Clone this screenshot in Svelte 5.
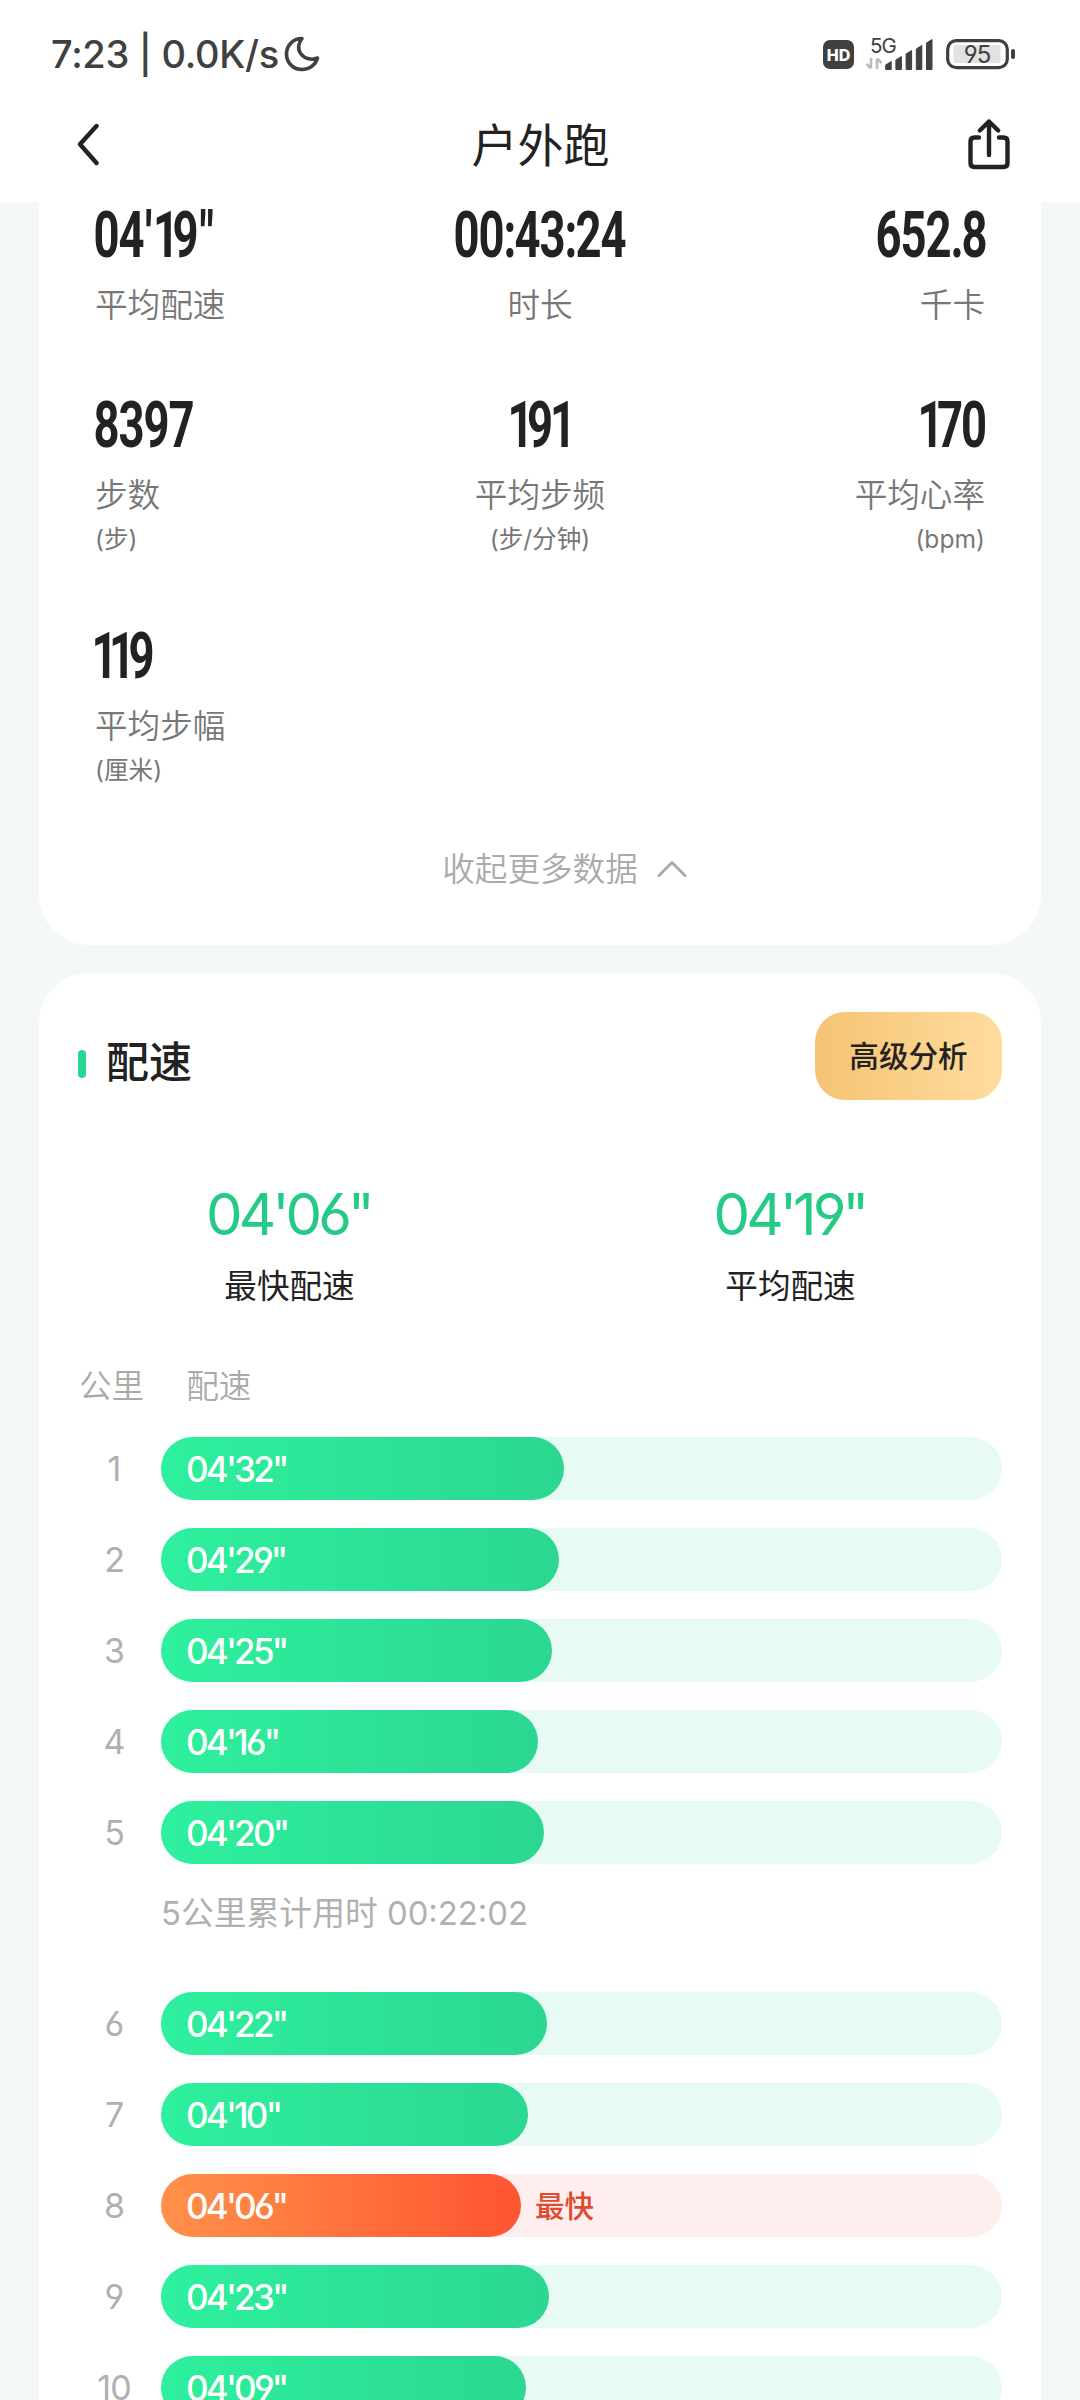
<script lang="ts">
	type Stat = { value: string; label: string; unit?: string };
	type Split = { km: number; pace: string; width: number; fastest?: boolean };

	const stats: Stat[] = [
		{ value: "04'19\"", label: "平均配速" },
		{ value: "00:43:24", label: "时长" },
		{ value: "652.8", label: "千卡" },
		{ value: "8397", label: "步数", unit: "(步)" },
		{ value: "191", label: "平均步频", unit: "(步/分钟)" },
		{ value: "170", label: "平均心率", unit: "(bpm)" },
		{ value: "119", label: "平均步幅", unit: "(厘米)" },
	];

	const summary = [
		{ value: "04'06\"", label: "最快配速" },
		{ value: "04'19\"", label: "平均配速" },
	];

	// width: percentage of the track
	const splits: Split[] = [
		{ km: 1, pace: "04'32\"", width: 47.9 },
		{ km: 2, pace: "04'29\"", width: 47.3 },
		{ km: 3, pace: "04'25\"", width: 46.5 },
		{ km: 4, pace: "04'16\"", width: 44.8 },
		{ km: 5, pace: "04'20\"", width: 45.6 },
		{ km: 6, pace: "04'22\"", width: 45.9 },
		{ km: 7, pace: "04'10\"", width: 43.6 },
		{ km: 8, pace: "04'06\"", width: 42.8, fastest: true },
		{ km: 9, pace: "04'23\"", width: 46.1 },
		{ km: 10, pace: "04'09\"", width: 43.4 },
	];

	const signal = [8, 13, 19, 24, 30];

	// condensed figures: the glyphs are squeezed and spaced by this table
	const SQUEEZE = 0.71;
	const advances: Record<string, number> = {
		"1": 17.5,
		"7": 24,
		":": 11,
		".": 11,
		"'": 11.5,
		'"': 18,
	};
	const shifts: Record<string, number> = { "1": -2, "'": 1.5, '"': 2 };

	function advance(ch: string): number {
		return advances[ch] ?? 25;
	}

	function figureWidth(value: string): number {
		return [...value].reduce((sum, ch) => sum + advance(ch), -3);
	}

	function figureX(value: string): string {
		let x = -1.5;
		return [...value]
			.map((ch) => {
				const at = (x + (shifts[ch] ?? 0)) / SQUEEZE;
				x += advance(ch);
				return at.toFixed(1);
			})
			.join(" ");
	}
</script>

<div class="screen">
	<header>
		<div class="status">
			<span class="clock">7:23 | 0.0K/s</span>
			<svg class="moon" width="36" height="36" viewBox="0 0 36 36">
				<path
					d="M18 2.5C8.500 2.500 2.500 10 2.500 18C2.500 27 9.500 33.500 18 33.500C25.500 33.500 31.500 29 33.500 22C28 24.500 21 23 17 18C13.500 13.500 14 7 18 2.500Z"
				/>
			</svg>
			<div class="status-icons">
				<span class="hd">HD</span>
				<svg class="signal" width="68" height="36" viewBox="0 0 68 36">
					<text x="4" y="17">5G</text>
					<path class="arrows" d="M5 22v10M5 32.500l-4.500-4.500M11 33V23M11 22.500l4.500 4.500" />
					{#each signal as h, i}
						<path
							class="tick"
							d="M{19.700 + i * 10.200} 33.500v{3.500 - h}l5.500-3.500v{h}z"
						/>
					{/each}
				</svg>
				<svg class="battery" width="71" height="32" viewBox="0 0 71 32">
					<rect class="shell" x="2.700" y="2.700" width="59.600" height="27" rx="8.500" />
					<rect class="charge" x="8.500" y="7" width="47" height="18" rx="2" />
					<rect class="nub" x="66" y="11" width="4" height="10" rx="2" />
					<text x="32" y="24.500">95</text>
				</svg>
			</div>
		</div>
		<nav>
			<svg class="line" width="30" height="44" viewBox="0 0 30 44">
				<path d="M24.500 4L8 22.300L24.500 41" />
			</svg>
			<h1>户外跑</h1>
			<svg class="line" width="48" height="54" viewBox="0 0 48 54">
				<path
					d="M14 20.500H9.500q-4 0-4 4V46q0 4 4 4H38.500q4 0 4-4V24.500q0-4-4-4H34M24 38V4.500M14.800 13.500L24 4.500L33.200 13.500"
				/>
			</svg>
		</nav>
	</header>

	<section class="card overview">
		<div class="stats">
			{#each stats as s}
				<div class="stat">
					<svg class="figure" width={figureWidth(s.value)} height="60">
						<text x={figureX(s.value)} y="53" transform="scale({SQUEEZE} 1)">{s.value}</text>
					</svg>
					<div class="label">{s.label}</div>
					{#if s.unit}
						<div class="unit">{s.unit}</div>
					{/if}
				</div>
			{/each}
		</div>
		<div class="toggle">
			<span>收起更多数据</span>
			<svg width="32" height="20" viewBox="0 0 32 20">
				<path d="M3 16.500L16 3.500L29 16.500" />
			</svg>
		</div>
	</section>

	<section class="card pace">
		<div class="pace-head">
			<h2>配速</h2>
			<button>高级分析</button>
		</div>
		<div class="summary">
			{#each summary as item}
				<div>
					<div class="summary-value">{item.value}</div>
					<div class="summary-label">{item.label}</div>
				</div>
			{/each}
		</div>
		<div class="columns">
			<span>公里</span>
			<span>配速</span>
		</div>
		<div class="splits">
			{#each splits as s}
				<div class="split" class:fastest={s.fastest}>
					<span class="km">{s.km}</span>
					<div class="track">
						<div class="fill" style="width: {s.width}%">{s.pace}</div>
						{#if s.fastest}
							<span class="tag">最快</span>
						{/if}
					</div>
				</div>
				{#if s.km === 5}
					<div class="note">5公里累计用时 00:22:02</div>
				{/if}
			{/each}
		</div>
	</section>
</div>

<style>
	:global(body) {
		background: #f4f8f7;
	}

	.screen {
		width: 1080px;
		height: 2400px;
		overflow: hidden;
		background: #f4f8f7;
		color: #222;
		font-family: Inter, "Noto Sans CJK SC", sans-serif;
		/* open six and nine */
		font-feature-settings: "cv03", "cv04";
	}

	header {
		box-sizing: border-box;
		height: 202px;
		background: #fff;
	}

	.status {
		display: flex;
		align-items: center;
		height: 108px;
		padding: 0 64px 0 51px;
		color: #404040;
	}

	.clock {
		width: 228px;
		font-size: 38px;
		font-weight: 450;
		letter-spacing: -0.3px;
		white-space: pre;
	}

	.moon {
		margin-left: 5px;
		fill: none;
		stroke: #404040;
		stroke-width: 3.6;
		stroke-linejoin: round;
	}

	.status-icons {
		display: flex;
		align-items: center;
		margin-left: auto;
	}

	.hd {
		width: 31px;
		height: 29px;
		border-radius: 7px;
		background: #404040;
		color: #fff;
		font: 800 16px/30px Inter, sans-serif;
		text-align: center;
	}

	.signal {
		margin-left: 12px;
		overflow: visible;
		fill: #404040;
		font-size: 20.5px;
		letter-spacing: -1px;
	}

	.arrows {
		fill: none;
		stroke: #bbb;
		stroke-width: 2.6;
	}

	.tick {
		stroke: #404040;
		stroke-width: 1;
		stroke-linejoin: round;
	}

	.battery {
		margin-left: 11px;
		fill: #404040;
		font-size: 24px;
		letter-spacing: -1px;
		text-anchor: middle;
	}

	.shell {
		fill: none;
		stroke: #404040;
		stroke-width: 3.2;
	}

	.charge {
		fill: #e2e2e2;
	}

	nav {
		display: flex;
		align-items: center;
		justify-content: space-between;
		height: 72px;
		padding: 0 67px 0 72px;
	}

	.line {
		fill: none;
		stroke: #222;
		stroke-width: 4.4;
		stroke-linecap: round;
		stroke-linejoin: round;
	}

	h1 {
		margin: 2px 0 0 14px;
		font-size: 46px;
		font-weight: 400;
		line-height: 72px;
	}

	.card {
		margin: 0 39px;
		background: #fff;
	}

	.overview {
		padding: 2px 56px 56px;
		border-radius: 0 0 50px 50px;
	}

	.stats {
		display: grid;
		grid-template-columns: repeat(3, 1fr);
		grid-template-rows: 122px auto auto;
		row-gap: 68px;
	}

	.stat {
		display: flex;
		flex-direction: column;
		align-items: flex-start;
	}

	.stat:nth-child(3n + 2) {
		align-items: center;
	}

	.stat:nth-child(3n) {
		align-items: flex-end;
	}

	.figure {
		overflow: visible;
		fill: #222;
		font-family: Roboto, sans-serif;
		font-size: 64px;
		font-weight: 700;
	}

	.label {
		margin-top: 21px;
		font-size: 32.6px;
		font-weight: 350;
		line-height: 40px;
		color: #777;
	}

	.unit {
		margin-top: 6px;
		font-size: 24.6px;
		font-weight: 380;
		line-height: 36px;
		color: #777;
	}

	.toggle {
		display: flex;
		align-items: center;
		justify-content: center;
		gap: 18px;
		margin-top: 61px;
		padding-left: 50px;
		font-size: 32.6px;
		font-weight: 350;
		line-height: 40px;
		color: #aaa;
	}

	.toggle svg {
		fill: none;
		stroke: #aaa;
		stroke-width: 3;
		stroke-linecap: round;
		stroke-linejoin: round;
	}

	.pace {
		height: 1500px;
		margin-top: 28px;
		border-radius: 50px 50px 0 0;
	}

	.pace-head {
		display: flex;
		justify-content: space-between;
		padding: 39px 39px 0;
	}

	h2 {
		display: flex;
		align-items: center;
		gap: 20px;
		height: 76px;
		margin: 12px 0 0;
		font-size: 43px;
		font-weight: 500;
		line-height: 60px;
	}

	h2::before {
		content: "";
		width: 8px;
		height: 28px;
		margin-top: 4px;
		border-radius: 4px;
		background: #2bd68f;
	}

	button {
		width: 187px;
		height: 88px;
		padding: 0 0 4px;
		border: 0;
		border-radius: 30px;
		background: linear-gradient(90deg, #f5c373, #ffdd9f);
		color: #222;
		font: 500 29.6px Inter, "Noto Sans CJK SC", sans-serif;
	}

	.summary {
		display: grid;
		grid-template-columns: 1fr 1fr;
		margin-top: 79px;
		text-align: center;
	}

	.summary-value {
		padding-right: 2px;
		font-size: 58px;
		letter-spacing: -4px;
		line-height: 70px;
		color: #25ca86;
	}

	.summary-label {
		margin-top: 17px;
		font-size: 32.6px;
		line-height: 40px;
	}

	.columns {
		display: flex;
		gap: 42px;
		margin-top: 60px;
		padding-left: 40px;
		font-size: 32.6px;
		font-weight: 350;
		line-height: 40px;
		color: #aaa;
	}

	.splits {
		display: flex;
		flex-direction: column;
		gap: 28px;
		margin-top: 31px;
		padding: 0 39px;
	}

	.split {
		display: flex;
		height: 63px;
		line-height: 64px;
	}

	.km {
		width: 72px;
		margin-right: 11px;
		font-size: 34px;
		font-weight: 400;
		color: #b0b0b0;
		text-align: center;
		letter-spacing: -1px;
	}

	.track {
		display: flex;
		flex: 1;
		border-radius: 32px;
		background: #e8faf4;
	}

	.fill {
		box-sizing: border-box;
		padding-left: 25px;
		border-radius: 32px;
		background: linear-gradient(90deg, #2ef09d, #2bd791);
		color: #fff;
		font-size: 35px;
		font-weight: 500;
		letter-spacing: -2.8px;
	}

	.fastest .track {
		background: #feeeed;
	}

	.fastest .fill {
		background: linear-gradient(90deg, #ff914a, #ff5430);
	}

	.tag {
		margin-left: 14px;
		font-size: 29.500px;
		font-weight: 500;
		color: #e04a2e;
	}

	.note {
		height: 72px;
		padding-left: 83px;
		font-size: 32.8px;
		font-weight: 380;
		line-height: 43px;
		color: #b0b0b0;
	}
</style>
